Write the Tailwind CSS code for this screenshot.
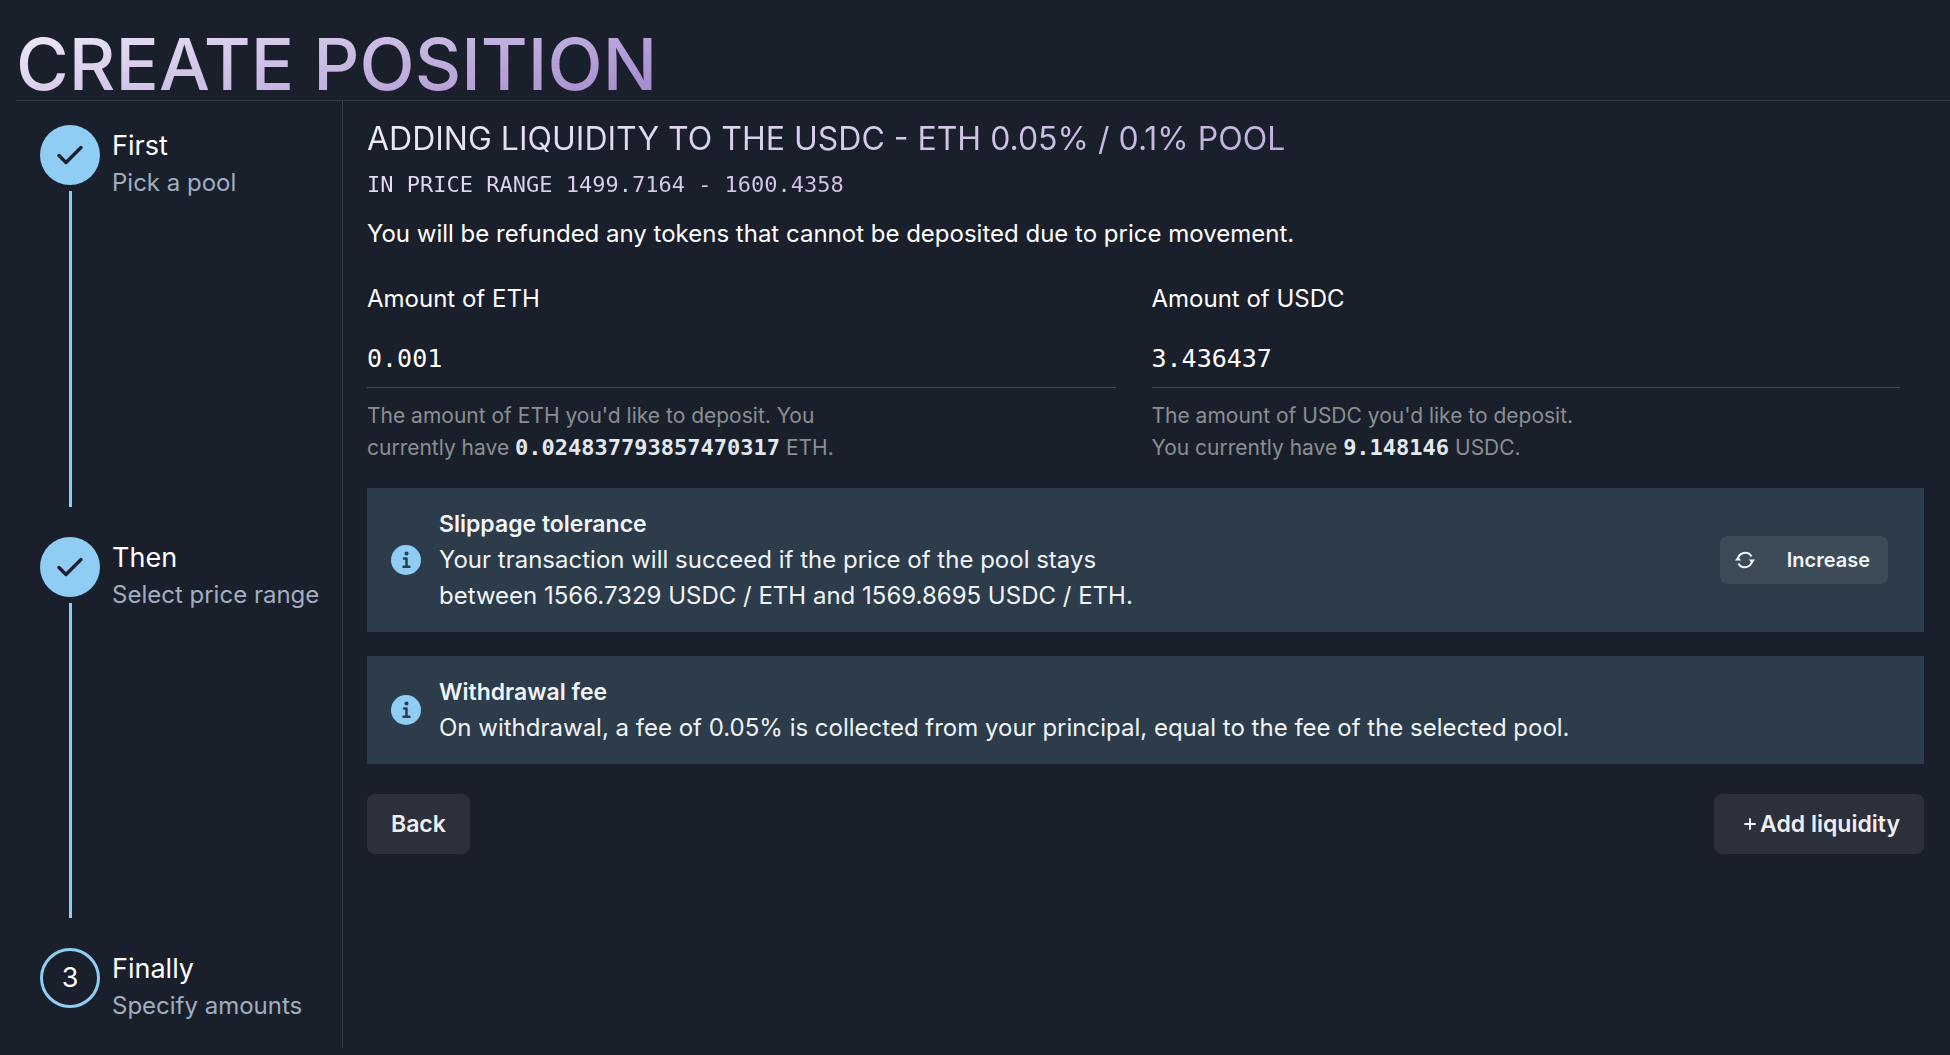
<!DOCTYPE html>
<html lang="en">
<head>
    <meta charset="UTF-8">
    <meta name="viewport" content="width=device-width, initial-scale=1.0">
    <title>Create Position</title>
    <script src="https://cdn.jsdelivr.net/npm/@tailwindcss/browser@4"></script>
</head>
<body class="bg-[#1a202b] min-h-screen text-white text-[24px] leading-9 font-['Inter',sans-serif]">
    <div class="pl-4 pt-6 pb-[7px] min-h-screen flex flex-col">
        <header class="border-b border-[#333945] h-[77px] flex items-end">
            <h1 class="text-[72px] leading-[72px] font-medium uppercase whitespace-nowrap bg-linear-165 from-[#f0ecf8] to-[#a287cc] bg-clip-text text-transparent">Create Position</h1>
        </header>

        <div class="flex grow">
            <!-- Stepper -->
            <nav class="w-[327px] shrink-0 border-r border-[#3a404b] pl-6 pt-6">
                <ol class="flex flex-col">
                    <li class="flex gap-3 h-[412px]">
                        <div class="flex flex-col items-center gap-[6px] pb-[30px]">
                            <span class="size-[60px] rounded-full bg-[#90cdf4] text-[#1a202c] flex items-center justify-center">
                                <svg class="size-[30px]" fill="none" stroke="currentColor" viewBox="0 0 30 30">
                                    <path stroke-linecap="round" stroke-linejoin="round" stroke-width="3.400" d="M4 15.500l7 7L26 7.500"></path>
                                </svg>
                            </span>
                            <span class="w-[3px] grow bg-[#90cdf4]"></span>
                        </div>
                        <div>
                            <h3 class="text-[27px] leading-[42px]">First</h3>
                            <p class="leading-8 text-[#a0aec0]">Pick a pool</p>
                        </div>
                    </li>
                    <li class="flex gap-3 h-[411px]">
                        <div class="flex flex-col items-center gap-[6px] pb-[30px]">
                            <span class="size-[60px] rounded-full bg-[#90cdf4] text-[#1a202c] flex items-center justify-center">
                                <svg class="size-[30px]" fill="none" stroke="currentColor" viewBox="0 0 30 30">
                                    <path stroke-linecap="round" stroke-linejoin="round" stroke-width="3.400" d="M4 15.500l7 7L26 7.500"></path>
                                </svg>
                            </span>
                            <span class="w-[3px] grow bg-[#90cdf4]"></span>
                        </div>
                        <div>
                            <h3 class="text-[27px] leading-[42px]">Then</h3>
                            <p class="leading-8 text-[#a0aec0]">Select price range</p>
                        </div>
                    </li>
                    <li class="flex gap-3">
                        <span class="size-[60px] rounded-full border-3 border-[#90cdf4] text-[27px] flex items-center justify-center">3</span>
                        <div>
                            <h3 class="text-[27px] leading-[42px]">Finally</h3>
                            <p class="leading-8 text-[#a0aec0]">Specify amounts</p>
                        </div>
                    </li>
                </ol>
            </nav>

            <!-- Amounts form -->
            <main class="grow pl-6 pr-[26px] pt-5">
                <h2 class="text-[32px] leading-9 uppercase bg-linear-165 from-[#f0ecf8] to-[#a287cc] bg-clip-text text-transparent">Adding liquidity to the USDC - ETH 0.05% / 0.1% pool</h2>
                <h3 class="mt-3 text-[22px] leading-8 uppercase font-['DejaVu_Sans_Mono',monospace] bg-linear-165 from-[#e6e0f2] to-[#a287cc] bg-clip-text text-transparent">In price range 1499.7164 - 1600.4358</h3>
                <p class="mt-[15px]">You will be refunded any tokens that cannot be deposited due to price movement.</p>

                <form>
                    <div class="mt-[29px] mr-6 grid grid-cols-2 gap-9">
                        <div>
                            <label for="eth" class="block">Amount of ETH</label>
                            <input id="eth" type="text" value="0.001" class="mt-3 block w-full h-[59px] bg-transparent border-b border-[#444a55] text-[25px] font-['DejaVu_Sans_Mono',monospace] outline-none">
                            <p class="mt-3 max-w-[480px] text-[21px] leading-8 text-[#8b8e94]">The amount of ETH you'd like to deposit. You currently have <strong class="text-[22px] text-[#e2e8f0] font-['DejaVu_Sans_Mono',monospace]">0.024837793857470317</strong> ETH.</p>
                        </div>
                        <div>
                            <label for="usdc" class="block">Amount of USDC</label>
                            <input id="usdc" type="text" value="3.436437" class="mt-3 block w-full h-[59px] bg-transparent border-b border-[#444a55] text-[25px] font-['DejaVu_Sans_Mono',monospace] outline-none">
                            <p class="mt-3 max-w-[450px] text-[21px] leading-8 text-[#8b8e94]">The amount of USDC you'd like to deposit. You currently have <strong class="text-[22px] text-[#e2e8f0] font-['DejaVu_Sans_Mono',monospace]">9.148146</strong> USDC.</p>
                        </div>
                    </div>

                    <div class="mt-6 bg-[#2d3c4a] py-[18px] pl-6 pr-9 flex items-center text-[#f0f4f8]">
                        <svg class="size-[30px] shrink-0 mr-[18px]" viewBox="0 0 30 30">
                            <circle cx="15" cy="15" r="15" fill="#90cdf4"></circle>
                            <circle cx="15.500" cy="8.500" r="2" fill="#2d3c4a"></circle>
                            <path d="M13 13.500h2.500v8M12.500 21.800h6" fill="none" stroke="#2d3c4a" stroke-width="2.500" stroke-linecap="round" stroke-linejoin="round"></path>
                        </svg>
                        <div class="grow">
                            <h4 class="text-[23px] font-semibold">Slippage tolerance</h4>
                            <p>Your transaction will succeed if the price of the pool stays<br>between 1566.7329 USDC / ETH and 1569.8695 USDC / ETH.</p>
                        </div>
                        <button type="button" class="h-12 rounded-lg bg-[#3d4a57] pl-[15px] pr-[18px] flex items-center gap-8 text-[20px] font-semibold">
                            <svg class="size-5" viewBox="0 0 20 20" fill="none" stroke="currentColor" stroke-width="2">
                                <path d="M3 9.500a7.200 7.200 0 0 1 13.500-3M17 10.500a7.200 7.200 0 0 1-13.500 3"></path>
                                <path d="M0 10.500l2.800-4 3.400 4zM13.800 9.500l3.400 4 2.800-4z" fill="currentColor" stroke="none"></path>
                            </svg>
                            Increase
                        </button>
                    </div>

                    <div class="mt-6 bg-[#2d3c4a] py-[18px] pl-6 pr-9 flex items-center text-[#f0f4f8]">
                        <svg class="size-[30px] shrink-0 mr-[18px]" viewBox="0 0 30 30">
                            <circle cx="15" cy="15" r="15" fill="#90cdf4"></circle>
                            <circle cx="15.500" cy="8.500" r="2" fill="#2d3c4a"></circle>
                            <path d="M13 13.500h2.500v8M12.500 21.800h6" fill="none" stroke="#2d3c4a" stroke-width="2.500" stroke-linecap="round" stroke-linejoin="round"></path>
                        </svg>
                        <div class="grow">
                            <h4 class="text-[23px] font-semibold">Withdrawal fee</h4>
                            <p>On withdrawal, a fee of 0.05% is collected from your principal, equal to the fee of the selected pool.</p>
                        </div>
                    </div>

                    <div class="mt-[30px] flex justify-between text-[23px] font-semibold text-[#eeeff2]">
                        <button type="button" class="h-[60px] rounded-lg bg-[#2c303a] px-6">Back</button>
                        <button type="submit" class="h-[60px] rounded-lg bg-[#2c303a] pl-[30px] pr-6 flex items-center gap-1">
                            <svg class="size-3" viewBox="0 0 12 12" stroke="currentColor" stroke-width="2" stroke-linecap="round">
                                <path d="M6 1v10M1 6h10"></path>
                            </svg>
                            Add liquidity
                        </button>
                    </div>
                </form>
            </main>
        </div>
    </div>
</body>
</html>
